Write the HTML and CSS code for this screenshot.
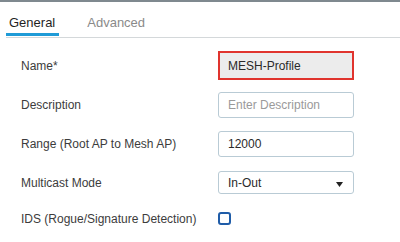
FILE: index.html
```html
<!DOCTYPE html>
<html>
<head>
<meta charset="utf-8">
<link rel="stylesheet" href="styles.css">
</head>
<body>
<div class="page">
  <div class="tabs">
    <div class="tab active">General</div>
    <div class="tab">Advanced</div>
  </div>
  <div class="form">
    <div class="row">
      <label class="label">Name*</label>
      <div class="field input highlighted">MESH-Profile</div>
    </div>
    <div class="row">
      <label class="label">Description</label>
      <div class="field input placeholder">Enter Description</div>
    </div>
    <div class="row">
      <label class="label">Range (Root AP to Mesh AP)</label>
      <div class="field input">12000</div>
    </div>
    <div class="row">
      <label class="label">Multicast Mode</label>
      <div class="field select">
        <span>In-Out</span>
        <svg class="caret" width="7" height="5" viewBox="0 0 7 5"><path d="M0 0 H7 L3.5 5 Z" fill="#222"/></svg>
      </div>
    </div>
    <div class="row short">
      <label class="label">IDS (Rogue/Signature Detection)</label>
      <div class="checkbox"></div>
    </div>
  </div>
</div>
</body>
</html>
```
FILE: styles.css
```css
html, body {
  margin: 0;
  padding: 0;
  background: #ffffff;
}
body {
  font-family: "Liberation Sans", Arial, sans-serif;
  color: #333;
}
.page {
  width: 400px;
  height: 242px;
  border-top: 2px solid #7f898f;
  box-sizing: border-box;
  overflow: hidden;
}
.tabs {
  display: flex;
  margin-left: 6px;
  padding-top: 13px;
  border-bottom: 1px solid #d4d8da;
  padding-bottom: 1px;
}
.tab {
  font-size: 13px;
  line-height: 15px;
  padding: 0 4px 3px 3px;
  border-bottom: 3px solid transparent;
  color: #8a8a8a;
  margin-right: 25px;
}
.tab.active {
  color: #1f1f1f;
  border-bottom-color: #1f9bd7;
}
.form {
  padding-top: 8px;
}
.row {
  display: flex;
  align-items: center;
  height: 39px;
}
.row.short {
  height: 33px;
}
.label {
  width: 197px;
  padding-left: 21px;
  font-size: 12px;
  color: #3c3c3c;
}
.field {
  box-sizing: border-box;
  width: 136px;
  font-size: 12px;
  color: #2a2a2a;
  display: flex;
  align-items: center;
}
.input {
  height: 26px;
  border: 1px solid #b9cbd5;
  border-radius: 3px;
  padding-left: 9px;
}
.input.highlighted {
  height: 29px;
  border: 2px solid #e0342e;
  border-radius: 0;
  background: #ececec;
  padding-left: 8px;
}
.input.placeholder {
  color: #9a9a9a;
}
.select {
  height: 23px;
  border: 1px solid #b9cbd5;
  border-radius: 3px;
  padding-left: 9px;
  padding-right: 10px;
  justify-content: space-between;
}
.caret {
  display: block;
  margin-top: 3px;
}
.checkbox {
  box-sizing: border-box;
  width: 13px;
  height: 13px;
  border: 2px solid #1f5ca8;
  border-radius: 3px;
}
```
